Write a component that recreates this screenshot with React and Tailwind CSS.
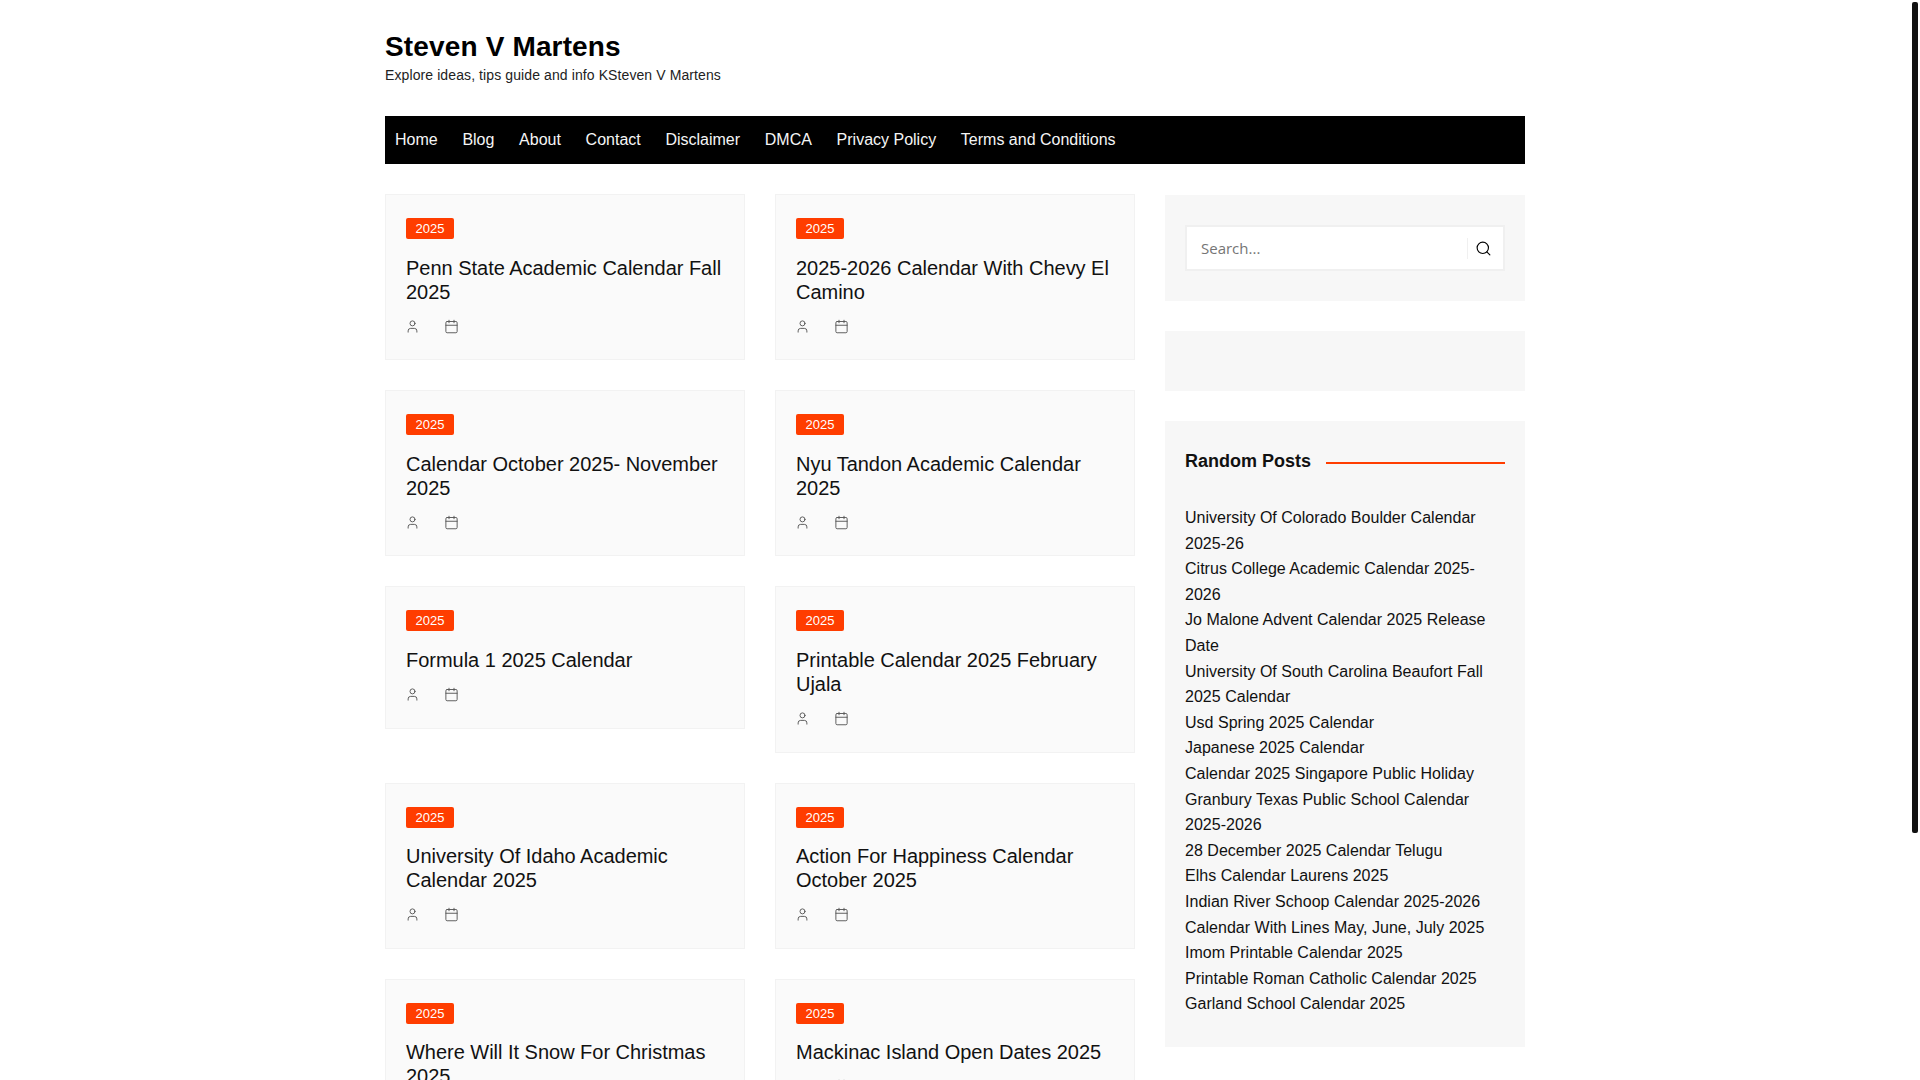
import React from 'react';
import { Calendar, Search, User } from 'lucide-react';

const navLinks = ['Home', 'Blog', 'About', 'Contact', 'Disclaimer', 'DMCA', 'Privacy Policy', 'Terms and Conditions'];

const posts = [
  'Penn State Academic Calendar Fall 2025',
  '2025-2026 Calendar With Chevy El Camino',
  'Calendar October 2025- November 2025',
  'Nyu Tandon Academic Calendar 2025',
  'Formula 1 2025 Calendar',
  'Printable Calendar 2025 February Ujala',
  'University Of Idaho Academic Calendar 2025',
  'Action For Happiness Calendar October 2025',
  'Where Will It Snow For Christmas 2025',
  'Mackinac Island Open Dates 2025',
];

const randomPosts = [
  'University Of Colorado Boulder Calendar 2025-26',
  'Citrus College Academic Calendar 2025-2026',
  'Jo Malone Advent Calendar 2025 Release Date',
  'University Of South Carolina Beaufort Fall 2025 Calendar',
  'Usd Spring 2025 Calendar',
  'Japanese 2025 Calendar',
  'Calendar 2025 Singapore Public Holiday',
  'Granbury Texas Public School Calendar 2025-2026',
  '28 December 2025 Calendar Telugu',
  'Elhs Calendar Laurens 2025',
  'Indian River Schoop Calendar 2025-2026',
  'Calendar With Lines May, June, July 2025',
  'Imom Printable Calendar 2025',
  'Printable Roman Catholic Calendar 2025',
  'Garland School Calendar 2025',
];

function PostCard({ title }) {
  return (
    <article className="border border-[#f2f2f2] bg-[#fafafa] px-5 pt-[23px] pb-[25.6px]">
      <span className="block w-[48px] h-[21px] rounded-[2px] bg-[#ff3d00] text-center text-[13px] leading-[21px] text-white">
        2025
      </span>
      <h2 className="mt-[16.6px] text-[20px] leading-[24px] font-normal tracking-[-0.02px] text-[#111]">{title}</h2>
      <div className="mt-[15px] -ml-px flex gap-6 text-[#555]">
        <User size={15} strokeWidth={1.5} />
        <Calendar size={15} strokeWidth={1.5} />
      </div>
    </article>
  );
}

function App() {
  return (
    <div className="flex h-screen overflow-hidden bg-white font-['Liberation_Sans',Arial,sans-serif] text-[#111]">
      <div className="flex-1">
        <div className="mx-auto w-[1140px]">
          <header className="pt-[29px] h-[116px]">
            <h1 className="text-[28px] leading-[36px] font-bold tracking-[0.15px] text-black">Steven V Martens</h1>
            <p className="text-[14px] leading-[20px] tracking-[0.1px] text-[#222]">Explore ideas, tips guide and info KSteven V Martens</p>
          </header>

          <nav className="flex h-[48px] items-center gap-[24.7px] bg-black px-[10px] text-[16px] text-[#f5f5f5]">
            {navLinks.map((link) => (
              <a key={link} href="#">{link}</a>
            ))}
          </nav>

          <div className="mt-[30px] flex gap-[30px]">
            <main className="grid w-[750px] grid-cols-2 items-start gap-[30px]">
              {posts.map((post) => (
                <PostCard key={post} title={post} />
              ))}
            </main>

            <aside className="flex w-[360px] flex-col gap-[30px] pt-[1px]">
              <div className="bg-[#f7f7f7] px-5 pt-[30px] pb-[30px]">
                <div className="flex h-[46px] items-center border-2 border-[#f0f0f0] bg-white pl-[14px]">
                  <input
                    className="min-w-0 flex-1 bg-transparent font-['Open_Sans',sans-serif] text-[15px] outline-none placeholder:text-[#757575]"
                    placeholder="Search..."
                  />
                  <div className="flex h-[21px] w-[36px] items-center border-l border-[#f0f0f0] pl-[7px]">
                    <Search size={17} strokeWidth={1.6} className="text-black" />
                  </div>
                </div>
              </div>

              <div className="h-[60px] bg-[#f7f7f7]" />

              <div className="bg-[#f7f7f7] px-5 pt-[28px] pb-[30px]">
                <div className="flex items-center gap-[15px]">
                  <h3 className="text-[18px] leading-[24px] font-bold">Random Posts</h3>
                  <span className="mt-[4px] h-[2px] flex-1 bg-[#ff3d00]" />
                </div>
                <ul className="mt-[32px] text-[16px] leading-[25.6px] tracking-[0.02px]">
                  {randomPosts.map((post) => (
                    <li key={post}>{post}</li>
                  ))}
                </ul>
              </div>
            </aside>
          </div>
        </div>
      </div>

      <div className="w-[10px] shrink-0 pt-[2px] pl-[2px]">
        <div className="h-[831px] w-[6px] rounded-[2px] bg-[#111]" />
      </div>
    </div>
  );
}

export default App;
